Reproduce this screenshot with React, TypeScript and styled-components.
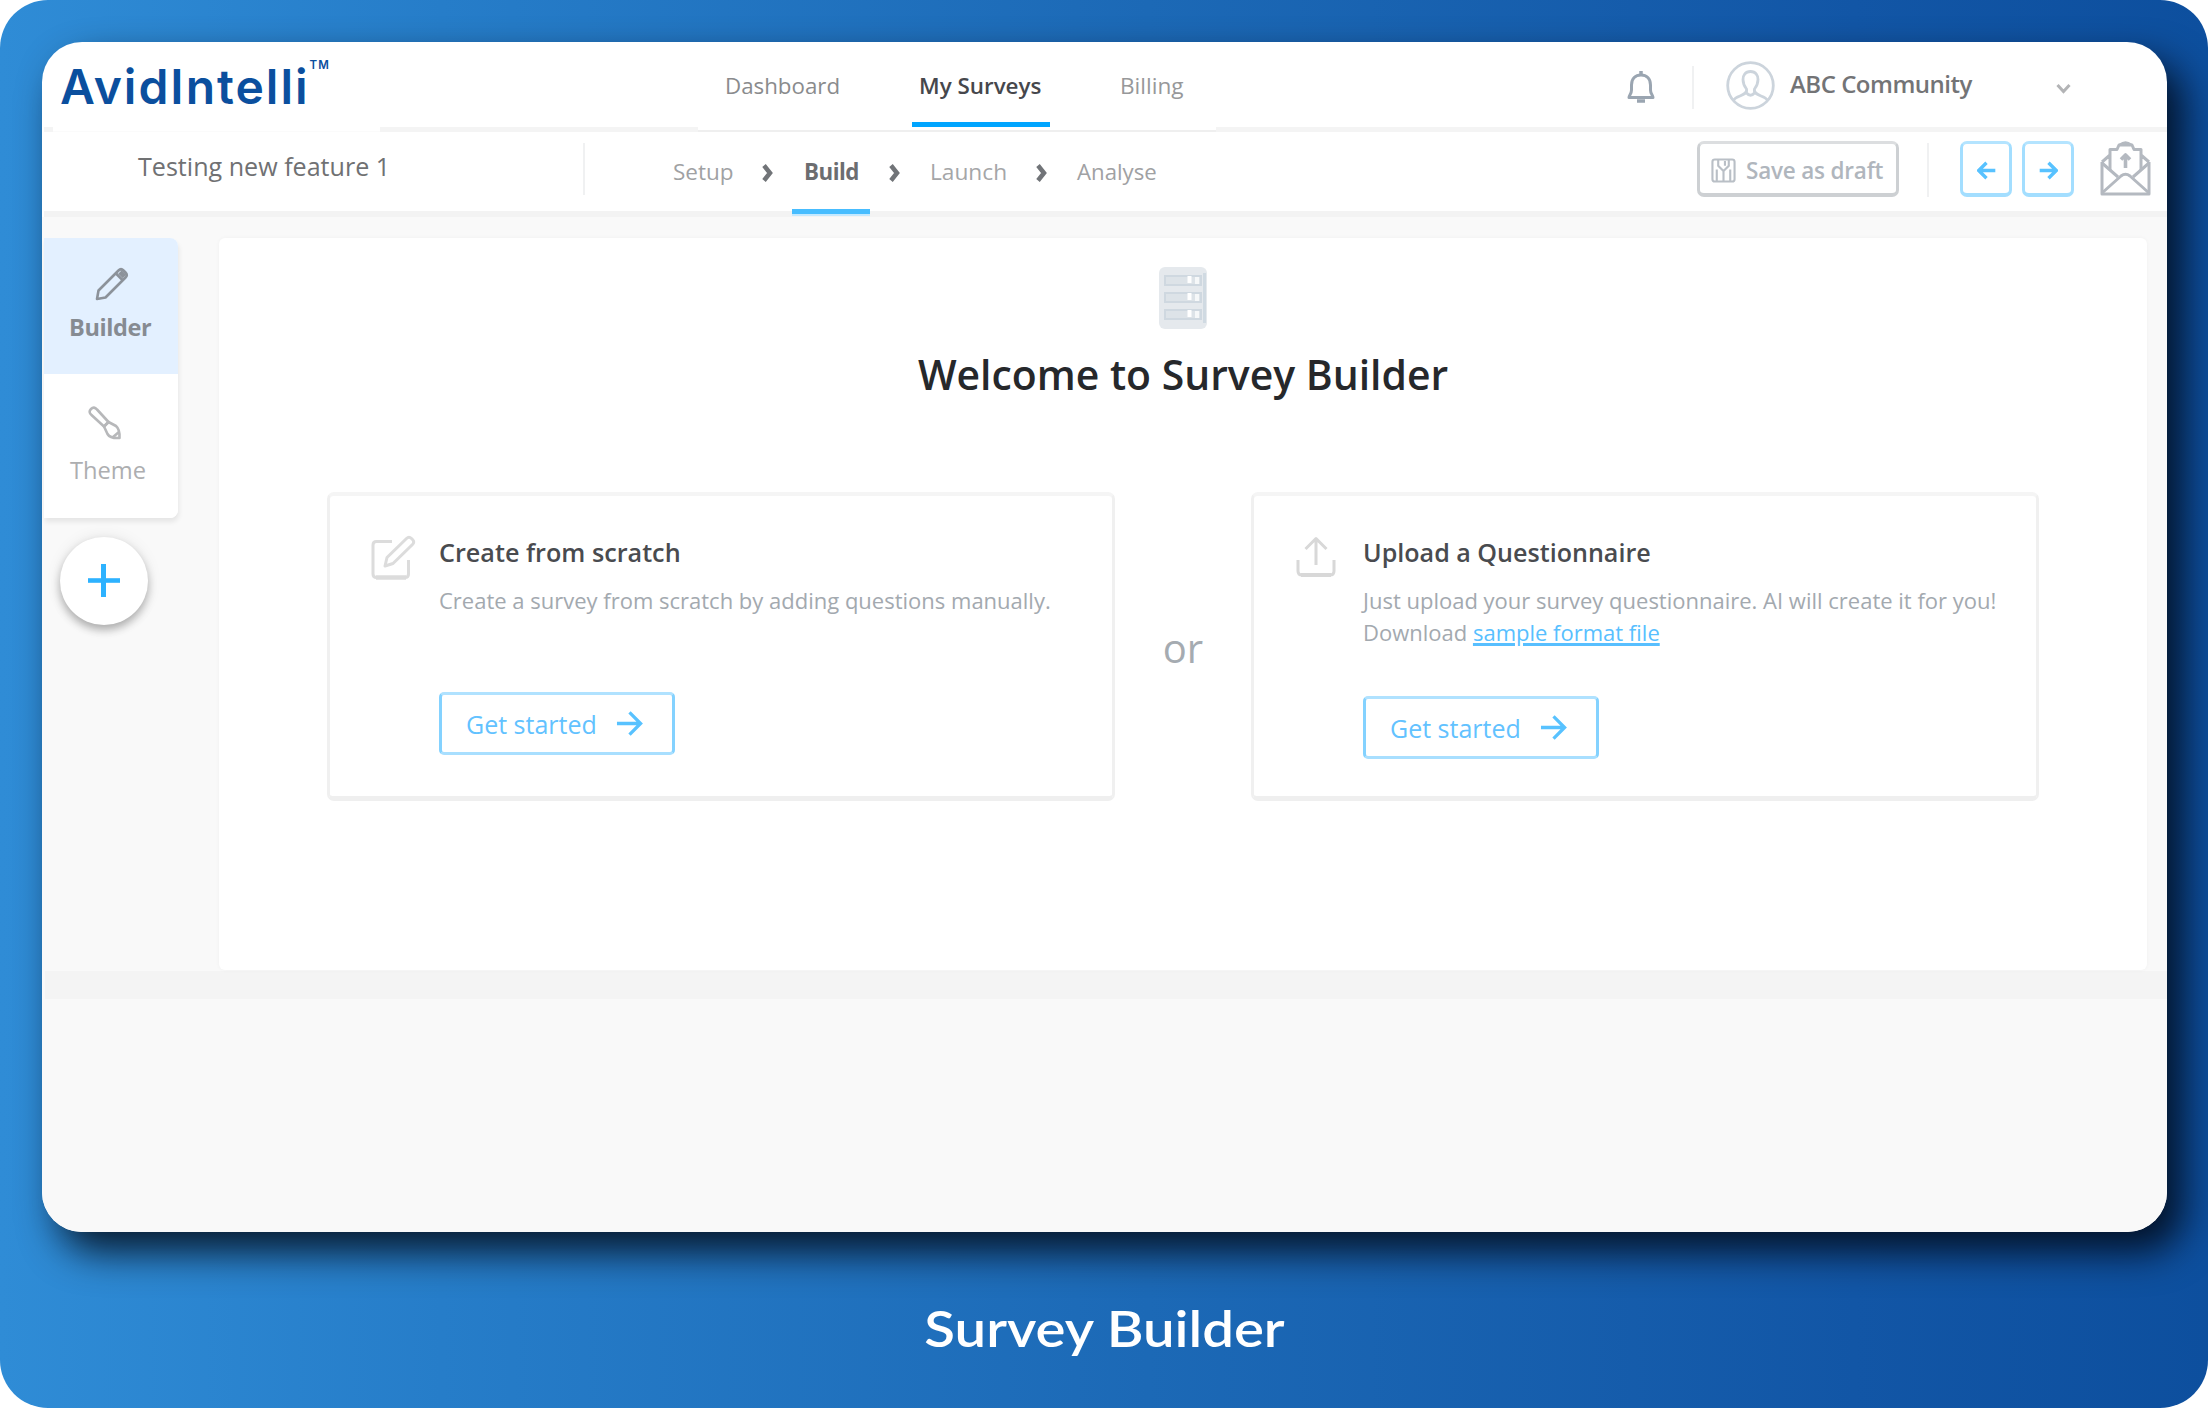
import React from "react";
import styled, { createGlobalStyle } from "styled-components";

const GlobalStyle = createGlobalStyle`
  *, *::before, *::after { box-sizing: border-box; }
  html, body { margin: 0; padding: 0; background: #fff; }
  body { font-family: "Open Sans", "Noto Sans", sans-serif; }
  svg { display: block; flex: none; }
`;

const Stage = styled.main`
  width: 2208px;
  height: 1408px;
  padding: 42px;
  overflow: hidden;
  border-radius: 48px;
  background: linear-gradient(90deg, #2f8cd6 0%, #267dc9 20%, #1c69b6 52%, #1256a6 84%, #0d4f9e 100%);
`;

const Window = styled.section`
  display: flex;
  flex-direction: column;
  width: 2125px;
  height: 1190px;
  overflow: hidden;
  border-radius: 40px;
  background: #fff;
  box-shadow: 16px 20px 38px rgba(0, 4, 12, 0.82);
`;

const Text = styled.span<{ $size: number; $color: string; $weight?: number; $track?: number }>`
  display: block;
  white-space: nowrap;
  text-align: left;
  font-size: ${(p) => p.$size}px;
  line-height: 36px;
  font-weight: ${(p) => p.$weight ?? 400};
  letter-spacing: ${(p) => p.$track ?? 0}px;
  color: ${(p) => p.$color};
`;

const Slot = styled.div<{ $w: number; $top?: number; $left?: number }>`
  flex: none;
  width: ${(p) => p.$w}px;
  padding: ${(p) => p.$top ?? 0}px 0 0 ${(p) => p.$left ?? 0}px;
`;

const Divider = styled.i<{ $h: number; $top: number; $after: number }>`
  flex: none;
  width: 2px;
  height: ${(p) => p.$h}px;
  margin: ${(p) => p.$top}px ${(p) => p.$after}px 0 0;
  background: #f0f1f2;
`;

const TopBar = styled.header`
  display: flex;
  flex: none;
  height: 85px;
`;

const Logo = styled.div`
  display: flex;
  flex: none;
  width: 670px;
  padding: 15px 0 0 18px;
  font-family: Inter, sans-serif;
  color: #0b4f9e;
`;

const LogoName = styled.span`
  font-size: 48px;
  line-height: 60px;
  font-weight: 600;
  letter-spacing: 2px;
`;

const LogoMark = styled.span`
  padding-top: 1px;
  font-size: 11.5px;
  line-height: 14px;
  font-weight: 600;
  letter-spacing: 1px;
`;

const Nav = styled.nav`
  display: flex;
  flex: none;
  width: 914px;
`;

const Tab = styled.a<{ $width: number; $pad: number; $active?: boolean }>`
  width: ${(p) => p.$width}px;
  height: 85px;
  padding: 26px 0 0 ${(p) => p.$pad}px;
  border-bottom: ${(p) => (p.$active ? "5px solid #00a5ff" : "none")};
`;

const Account = styled.div`
  display: flex;
  align-items: flex-start;
  padding-top: 19px;
`;

const Rule = styled.div`
  display: flex;
  align-items: flex-end;
  flex: none;
  height: 5px;
  padding-left: 2px;
`;

const RulePart = styled.i<{ $w?: number; $h: number; $tone: string }>`
  flex: ${(p) => (p.$w ? `0 0 ${p.$w}px` : "1")};
  height: ${(p) => p.$h}px;
  background: ${(p) => p.$tone};
`;

const SubBar = styled.div`
  display: flex;
  align-items: flex-start;
  flex: none;
  height: 79px;
  padding: 9px 0 0 96px;
`;

const SubRule = styled.div`
  flex: none;
  height: 6px;
  margin-left: 2px;
  background: #f3f3f3;
`;

const Step = styled.a<{ $width: number; $pad?: number; $active?: boolean }>`
  position: relative;
  flex: none;
  width: ${(p) => p.$width}px;
  height: 73px;
  padding: 13px 0 0 ${(p) => p.$pad ?? 0}px;
  border-bottom: ${(p) => (p.$active ? "5px solid #47bdff" : "none")};
  box-shadow: ${(p) => (p.$active ? "0 2px 0 #c4e9ff" : "none")};
`;

const DraftButton = styled.button`
  display: flex;
  align-items: center;
  flex: none;
  gap: 10px;
  width: 202px;
  height: 56px;
  margin-right: 28px;
  padding: 4px 0 0 11px;
  border: 3px solid #cdd0d3;
  border-top-color: #dcdee0;
  border-bottom-width: 4px;
  border-radius: 7px;
  background: #fff;
  font-family: inherit;
`;

const ArrowButton = styled.button<{ $after: number }>`
  display: flex;
  align-items: center;
  justify-content: center;
  flex: none;
  width: 52px;
  height: 56px;
  margin: 0 ${(p) => p.$after}px 0 0;
  padding: 3px 0 0;
  border: 3px solid #a3deff;
  border-top-color: #b4e4ff;
  border-bottom-width: 4px;
  border-radius: 7px;
  background: #fff;
`;

const Body = styled.div`
  flex: 1;
  background: #f9f9f9;
`;

const Workspace = styled.div`
  display: flex;
  height: 754px;
  padding: 21px 0 0 2px;
`;

const Side = styled.aside`
  flex: none;
  width: 134px;
`;

const SideMenu = styled.div`
  height: 280px;
  overflow: hidden;
  border-radius: 0 8px 8px 0;
  background: #fff;
  box-shadow: 1px 4px 5px rgba(0, 0, 0, 0.08);
`;

const SideItem = styled.a<{ $active?: boolean }>`
  display: block;
  height: ${(p) => (p.$active ? 136 : 144)}px;
  background: ${(p) => (p.$active ? "#e3f0ff" : "#fff")};
`;

const AddButton = styled.button`
  display: flex;
  align-items: center;
  justify-content: center;
  width: 88px;
  height: 88px;
  margin: 19px 0 0 16px;
  padding: 0;
  border: 0;
  border-radius: 50%;
  background: #fff;
  box-shadow: 0 5px 9px rgba(0, 0, 0, 0.28), 0 0 16px rgba(0, 0, 0, 0.08);
`;

const Panel = styled.section`
  display: flex;
  flex-direction: column;
  align-items: center;
  width: 1928px;
  height: 732px;
  margin-left: 41px;
  padding-top: 29px;
  border-radius: 6px;
  background: #fff;
  box-shadow: 0 0 4px rgba(0, 0, 0, 0.04);
`;

const Heading = styled.h1`
  margin: 15px 0 0;
  font-size: 40.9px;
  line-height: 60px;
  font-weight: 600;
  color: #26282b;
  white-space: nowrap;
`;

const Choices = styled.div`
  display: flex;
  margin-top: 88px;
`;

const Card = styled.article`
  display: flex;
  width: 788px;
  height: 309px;
  padding: 38px 0 0 41px;
  border: 3px solid #f0f0f0;
  border-top: 4px solid #f5f5f5;
  border-bottom: 5px solid #efefef;
  border-radius: 7px;
`;

const CardText = styled.p<{ $gap: number }>`
  margin: 14px 0 ${(p) => p.$gap}px;
  font-size: 22px;
  line-height: 32px;
  color: #a3a9af;
  white-space: nowrap;
`;

const Link = styled.a`
  color: #58bfff;
  text-decoration: underline;
  text-decoration-thickness: 3px;
  text-underline-offset: 2px;
`;

const StartButton = styled.button`
  display: flex;
  align-items: center;
  width: 236px;
  height: 63px;
  padding: 0 0 0 24px;
  border: 3px solid #84d2ff;
  border-top-color: #b0e2ff;
  border-bottom-color: #a8dfff;
  border-radius: 5px;
  background: #fff;
  font-family: inherit;
`;

const Or = styled.div`
  width: 136px;
  padding-top: 126px;
  text-align: center;
  font-size: 40px;
  line-height: 60px;
  color: #a5abb1;
`;

const Band = styled.div`
  height: 28px;
  margin-left: 3px;
  background: #f4f4f4;
`;

const Caption = styled.h2`
  width: 2125px;
  margin: 66px 0 0;
  transform: scaleX(1.15);
  text-align: center;
  font-family: Lato, sans-serif;
  font-size: 49px;
  line-height: 60px;
  font-weight: 600;
  color: #fff;
`;

const BellIcon = () => (
  <svg width="30" height="34" viewBox="0 0 30 34" fill="none" stroke="#9aa5b1" strokeWidth="3" strokeLinejoin="round">
    <path d="M3 27.500 H27 C27 25 24.500 24 24.500 20 V15 C24.500 8.500 20.500 5 15 5 C9.500 5 5.500 8.500 5.500 15 V20 C5.500 24 3 25 3 27.500 Z" />
    <path d="M15 1 V5 M11 31 H19" strokeWidth="3.500" />
  </svg>
);

const AvatarIcon = () => (
  <svg width="49" height="49" viewBox="0 0 49 49" fill="none" stroke="#ccd4dc" strokeWidth="2.800">
    <circle cx="24.500" cy="24.500" r="22.800" />
    <path d="M24.500 10.500 C19 10.500 17 14.500 17 18.500 C17 23 18.500 25.500 20.500 28 C21.500 32 18 33.500 14 35 C10.500 36.300 8.500 37.500 7.500 39.500 M24.500 10.500 C30 10.500 32 14.500 32 18.500 C32 23 30.500 25.500 28.500 28 C27.500 32 31 33.500 35 35 C38.500 36.300 40.500 37.500 41.500 39.500 M20.500 32 Q24.500 36.500 28.500 32" />
  </svg>
);

const CaretIcon = () => (
  <svg width="15" height="11" viewBox="0 0 15 11" fill="none">
    <path d="M1.500 2 L7.500 8.500 L13.500 2" stroke="#b3b4b6" strokeWidth="3" />
  </svg>
);

const ChevronIcon = () => (
  <svg width="13" height="20" viewBox="0 0 13 20" fill="none">
    <path d="M2 2.500 L8 10 L2 17.500" stroke="#717478" strokeWidth="4.500" />
  </svg>
);

const SaveIcon = () => (
  <svg width="25" height="25" viewBox="0 0 26 26" fill="none" stroke="#b9bfc6" strokeWidth="2.200">
    <path d="M1.500 4 Q1.500 1.500 4 1.500 H22 Q24.500 1.500 24.500 4 V22 Q24.500 24.500 22 24.500 H4 Q1.500 24.500 1.500 22 Z" />
    <path d="M7.500 2 V8 L13 13.500 L18.500 8 V2 M14.500 3 V8 M6 24 V12 M20 24 V12 M13 13.500 V24" />
  </svg>
);

const EnvelopeIcon = () => (
  <svg width="51" height="55" viewBox="0 0 51 55" fill="none" stroke="#b4b9c0" strokeWidth="3" strokeLinejoin="round">
    <path d="M2 21 V53 H49 V21" />
    <path d="M2 52 L21 35 Q25.500 31.500 30 35 L49 52" />
    <path d="M2 22 L18 36 M49 22 L33 36" />
    <path d="M2 21 L10 14 V29 M49 21 L41 14 V29 M10 14 V8.500 H17 L19 4 H32 L34 8.500 H41 V14" />
    <path d="M20 4 Q25.500 -0.500 31 4" />
    <path d="M25.500 15 V27 M21 18.500 L25.500 14 L30 18.500" strokeWidth="3.600" />
  </svg>
);

const PencilIcon = () => (
  <svg width="34" height="34" viewBox="0 0 34 34" fill="none" stroke="#8c929a" strokeWidth="2.600" strokeLinejoin="round">
    <path d="M2 32 L3.500 23.500 L23.500 3.500 Q26 1 28.500 3.500 L30.500 5.500 Q33 8 30.500 10.500 L10.500 30.500 Z" />
    <path d="M21 6.500 L27.500 13" />
    <path d="M25 5 L29.500 9.500" strokeWidth="5" />
  </svg>
);

const BrushIcon = () => (
  <svg width="34" height="34" viewBox="0 0 34 34" fill="none" stroke="#b7b8ba" strokeWidth="2.600" strokeLinejoin="round">
    <path d="M3 3 Q6 0 9 3.500 L20.500 16 L16 20.500 L3.500 9 Q0 6 3 3 Z" />
    <path d="M16 20.500 L20.500 16 L28 20 Q32 23.500 31.500 32 Q22 32.500 19.500 28 Z" />
    <path d="M25 31 L31 26" />
  </svg>
);

const PlusIcon = () => (
  <svg width="32" height="34" viewBox="0 0 32 34" fill="none" stroke="#2db2ff">
    <path d="M0 16.500 H32" strokeWidth="4.600" />
    <path d="M15.500 0 V33" strokeWidth="5" />
  </svg>
);

const FormIcon = () => (
  <svg width="48" height="62" viewBox="0 0 48 62">
    <rect width="48" height="62" rx="6" fill="#e5e9ed" />
    <path d="M45.500 6 V56" stroke="#d0dae2" strokeWidth="3" />
    {[9, 26, 43].map((y) => (
      <g key={y}>
        <rect x="6" y={y} width="36" height="9" fill="#dde3e8" stroke="#cfd8e0" strokeWidth="2" />
        <rect x="28.500" y={y} width="4" height="7" fill="#fff" />
        <rect x="36" y={y + 1} width="4" height="7" fill="#f6f8f9" />
      </g>
    ))}
  </svg>
);

const EditIcon = () => (
  <svg width="45" height="46" viewBox="0 0 45 46" fill="none" stroke="#dcdcdc" strokeWidth="3" strokeLinejoin="round">
    <path d="M21 6.500 H5.500 Q2 6.500 2 10 V39 Q2 42.500 5.500 42.500 H34 Q37.500 42.500 37.500 39 V25" />
    <path d="M5 42.500 H35" strokeWidth="4.500" />
    <path d="M14 31 L16 22.500 L35.500 3.500 Q38 1 40.500 3.500 L41.500 4.500 Q44 7 41.500 9.500 L22 28.500 Z" strokeWidth="3" />
  </svg>
);

const UploadIcon = () => (
  <svg width="40" height="42" viewBox="0 0 40 42" fill="none" stroke="#d8d8d8" strokeWidth="3" strokeLinejoin="round">
    <path d="M2 24 V35 Q2 39 6 39 H34 Q38 39 38 35 V24" />
    <path d="M5 39 H35" strokeWidth="4" />
    <path d="M20 29 V2 M9.500 13 L20 2.500 L30.500 13" />
  </svg>
);

const ArrowIcon = ({ size = 27, weight = 3.4, back = false }: { size?: number; weight?: number; back?: boolean }) => (
  <svg width={size} height={size} viewBox="0 0 28 28" fill="none" stroke="#58c2ff" strokeWidth={weight}>
    <path d={back ? "M27 14 H3 M14 2.500 L2.500 14 L14 25.500" : "M1 14 H25 M14 2.500 L25.500 14 L14 25.500"} />
  </svg>
);

const StartAction = () => (
  <StartButton>
    <Slot $w={150}><Text $size={25} $color="#62c2ff" $weight={500}>Get started</Text></Slot>
    <ArrowIcon />
  </StartButton>
);

export default function App() {
  return (
    <>
      <GlobalStyle />
      <Stage>
        <Window>
          <TopBar>
            <Logo>
              <LogoName>AvidIntelli</LogoName>
              <LogoMark>TM</LogoMark>
            </Logo>
            <Nav>
              <Tab $width={200} $pad={13}><Text $size={22.3} $color="#8a8b8d">Dashboard</Text></Tab>
              <Tab $width={138} $pad={7} $active><Text $size={22.4} $color="#46474c" $weight={600}>My Surveys</Text></Tab>
              <Tab $width={200} $pad={70}><Text $size={22.6} $color="#97989a">Billing</Text></Tab>
            </Nav>
            <Account>
              <Slot $w={66} $top={9}><BellIcon /></Slot>
              <Divider $h={43} $top={5} $after={32} />
              <Slot $w={64}><AvatarIcon /></Slot>
              <Slot $w={266} $top={5}><Text $size={24} $color="#737476" $weight={600} $track={-0.5}>ABC Community</Text></Slot>
              <Slot $w={15} $top={22}><CaretIcon /></Slot>
            </Account>
          </TopBar>
          <Rule>
            <RulePart $w={9} $h={5} $tone="#f4f4f4" />
            <RulePart $w={327} $h={1} $tone="#fbfbfb" />
            <RulePart $w={318} $h={5} $tone="#f4f4f4" />
            <RulePart $w={518} $h={2} $tone="#efefef" />
            <RulePart $h={5} $tone="#f4f4f4" />
          </Rule>
          <SubBar>
            <Slot $w={445} $top={7}><Text $size={25.1} $color="#707173">Testing new feature 1</Text></Slot>
            <Divider $h={52} $top={2} $after={87} />
            <Step $width={90} $pad={1}><Text $size={22.5} $color="#a0a1a3">Setup</Text></Step>
            <Slot $w={30} $top={22}><ChevronIcon /></Slot>
            <Step $width={78} $pad={12} $active><Text $size={22.3} $color="#6c6d70" $weight={700} $track={-0.5}>Build</Text></Step>
            <Slot $w={60} $top={22} $left={19}><ChevronIcon /></Slot>
            <Step $width={106}><Text $size={22.7} $color="#a5a6a8">Launch</Text></Step>
            <Slot $w={41} $top={22}><ChevronIcon /></Slot>
            <Step $width={620}><Text $size={22.2} $color="#a0a1a3">Analyse</Text></Step>
            <DraftButton>
              <SaveIcon />
              <Text $size={22.5} $color="#b0b6bd" $weight={600} $track={-0.2}>Save as draft</Text>
            </DraftButton>
            <Divider $h={54} $top={2} $after={31} />
            <ArrowButton $after={10}><ArrowIcon size={19} weight={5} back /></ArrowButton>
            <ArrowButton $after={26}><ArrowIcon size={19} weight={5} /></ArrowButton>
            <EnvelopeIcon />
          </SubBar>
          <SubRule />
          <Body>
            <Workspace>
              <Side>
                <SideMenu>
                  <SideItem $active>
                    <Slot $w={134} $top={29} $left={51}><PencilIcon /></Slot>
                    <Slot $w={134} $top={8} $left={25}><Text $size={23.5} $color="#868b92" $weight={700} $track={-0.4}>Builder</Text></Slot>
                  </SideItem>
                  <SideItem>
                    <Slot $w={134} $top={32} $left={44}><BrushIcon /></Slot>
                    <Slot $w={134} $top={12} $left={26}><Text $size={23.7} $color="#adaeb0">Theme</Text></Slot>
                  </SideItem>
                </SideMenu>
                <AddButton><PlusIcon /></AddButton>
              </Side>
              <Panel>
                <FormIcon />
                <Heading>Welcome to Survey Builder</Heading>
                <Choices>
                  <Card>
                    <Slot $w={68} $top={1}><EditIcon /></Slot>
                    <div>
                      <Text $size={25.2} $color="#494b4f" $weight={600}>Create from scratch</Text>
                      <CardText $gap={76}>Create a survey from scratch by adding questions manually.</CardText>
                      <StartAction />
                    </div>
                  </Card>
                  <Or>or</Or>
                  <Card>
                    <Slot $w={68} $top={2} $left={1}><UploadIcon /></Slot>
                    <div>
                      <Text $size={25.1} $color="#494b4f" $weight={600}>Upload a Questionnaire</Text>
                      <CardText $gap={48}>
                        Just upload your survey questionnaire. AI will create it for you!<br />
                        Download <Link>sample format file</Link>
                      </CardText>
                      <StartAction />
                    </div>
                  </Card>
                </Choices>
              </Panel>
            </Workspace>
            <Band />
          </Body>
        </Window>
        <Caption>Survey Builder</Caption>
      </Stage>
    </>
  );
}
